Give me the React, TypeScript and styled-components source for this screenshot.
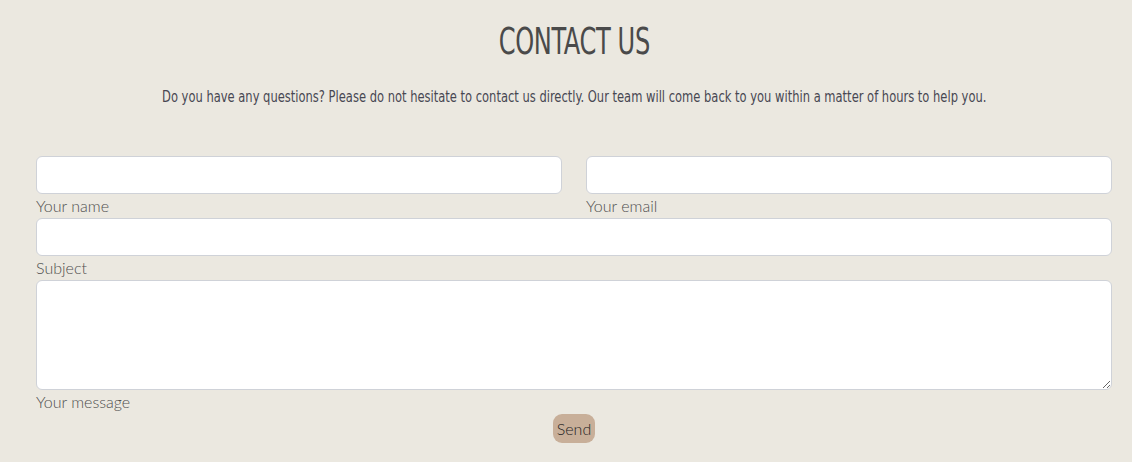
import React from "react";
import styled, { createGlobalStyle } from "styled-components";

const Global = createGlobalStyle`
  html, body { margin: 0; padding: 0; background: #ebe8e0; }
  body { font-family: "Lato", "Liberation Sans", sans-serif; }
`;

const Page = styled.div`
  background: #ebe8e0;
  min-height: 462px;
  padding: 0 20px 0 36px;
  box-sizing: border-box;
`;

const Header = styled.header`
  display: flex;
  flex-direction: column;
  align-items: center;
`;

const Title = styled.h1`
  margin: 0;
  padding-top: 21px;
  font-family: "DejaVu Sans Condensed", "DejaVu Sans", sans-serif;
  font-stretch: condensed;
  font-weight: 400;
  font-size: 37px;
  line-height: 42px;
  color: #4a4a4a;
  letter-spacing: -0.5px;
  transform: scaleX(0.725);
  white-space: nowrap;
`;

const Lead = styled.p`
  margin: 24px 0 0;
  font-family: "DejaVu Sans Condensed", "DejaVu Sans", sans-serif;
  font-stretch: condensed;
  font-size: 15px;
  line-height: 20px;
  color: #474752;
  transform: scaleX(0.853);
  white-space: nowrap;
`;

const Form = styled.form`
  margin-top: 49px;
  display: flex;
  flex-direction: column;
`;

const Row = styled.div`
  display: grid;
  grid-template-columns: 1fr 1fr;
  column-gap: 24px;
`;

const Field = styled.label`
  display: flex;
  flex-direction: column;
`;

const Input = styled.input`
  box-sizing: border-box;
  height: 38px;
  width: 100%;
  background: #fff;
  border: 1px solid #cfd2d8;
  border-radius: 6px;
  padding: 0 10px;
  font: inherit;
  outline: none;
`;

const Area = styled.textarea`
  box-sizing: border-box;
  height: 110px;
  width: 100%;
  background: #fff;
  border: 1px solid #cfd2d8;
  border-radius: 6px;
  padding: 8px 10px;
  font: inherit;
  outline: none;
  display: block;
`;

const Caption = styled.span`
  font-family: "Lato", "Liberation Sans", sans-serif;
  font-weight: 300;
  font-size: 16px;
  line-height: 24px;
  color: #4f4f4f;
`;

const Actions = styled.div`
  display: flex;
  justify-content: center;
`;

const Send = styled.button`
  height: 29px;
  padding: 0 4px;
  border: none;
  border-radius: 9px;
  background: #c8af99;
  color: #1f1f1f;
  font-family: "Lato", "Liberation Sans", sans-serif;
  font-weight: 300;
  font-size: 16px;
  cursor: pointer;
`;

export default function App() {
  return (
    <Page>
      <Global />
      <Header>
        <Title>CONTACT US</Title>
        <Lead>
          Do you have any questions? Please do not hesitate to contact us directly. Our team will come back to you within a matter of hours to help you.
        </Lead>
      </Header>
      <Form onSubmit={(e) => e.preventDefault()}>
        <Row>
          <Field>
            <Input type="text" />
            <Caption>Your name</Caption>
          </Field>
          <Field>
            <Input type="email" />
            <Caption>Your email</Caption>
          </Field>
        </Row>
        <Field>
          <Input type="text" />
          <Caption>Subject</Caption>
        </Field>
        <Field>
          <Area />
          <Caption>Your message</Caption>
        </Field>
        <Actions>
          <Send type="submit">Send</Send>
        </Actions>
      </Form>
    </Page>
  );
}
